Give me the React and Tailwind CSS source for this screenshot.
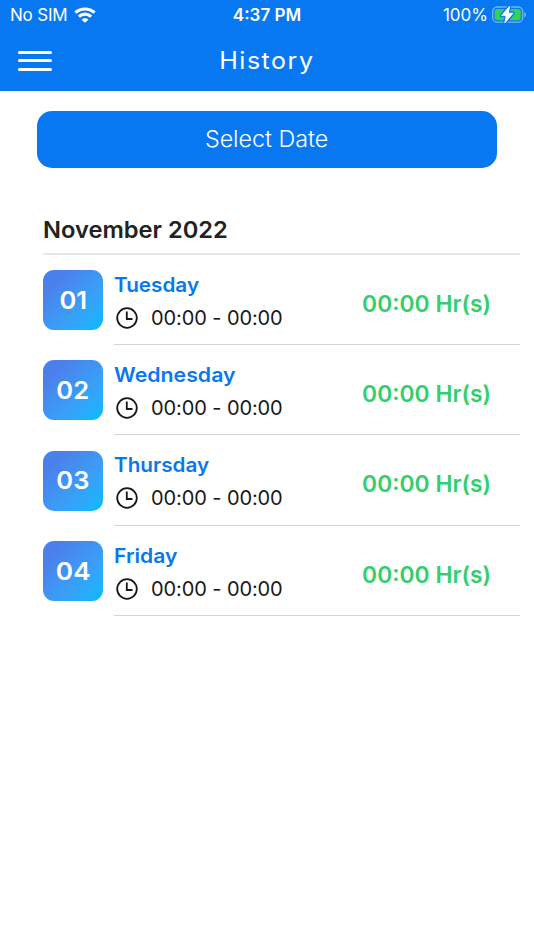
const days = [
  { date: '01', name: 'Tuesday', dateClass: 'scale-x-[1.04]', nameClass: 'scale-x-[1.035]' },
  { date: '02', name: 'Wednesday', dateClass: 'scale-x-[1.04]', nameClass: 'scale-x-[1.065]' },
  { date: '03', name: 'Thursday', dateClass: 'scale-x-[1.04]', nameClass: 'scale-x-[1.035]' },
  { date: '04', name: 'Friday', dateClass: 'scale-x-[1.07]', nameClass: 'scale-x-[1.055]' },
];

function WifiIcon() {
  return (
    <svg className="ml-[7px] h-[16px] w-[22px]" viewBox="0 0 22 16" fill="none" stroke="white" strokeWidth="3.1">
      <path d="M1.4 5.7C6.8 .7 15.2 .7 20.6 5.7" />
      <path d="M4.9 9.6C8.4 6.3 13.6 6.3 17.1 9.6" />
      <path d="M11 15.8 7.6 12.7C9.5 10.9 12.5 10.9 14.4 12.7Z" fill="white" stroke="none" />
    </svg>
  );
}

function BatteryIcon() {
  return (
    <svg className="ml-[4px] h-[20px] w-[35px]" viewBox="0 0 35 20" fill="none">
      <rect x="0.7" y="2.0" width="30" height="15.2" rx="4.5" stroke="#79b5f8" strokeWidth="1.3" />
      <rect x="2.6" y="3.9" width="26.2" height="11.4" rx="2.8" fill="#32d158" />
      <path d="M32.3 7C34.6 7.8 34.6 11.6 32.3 12.4Z" fill="#79b5f8" />
      <g strokeLinejoin="round">
        <path d="M17.6 1.2 9.6 10.6H14.2L12.9 17.8 21 8.3H16.3Z" stroke="#0879f2" strokeWidth="3.4" />
        <path d="M17.6 1.2 9.6 10.6H14.2L12.9 17.8 21 8.3H16.3Z" fill="white" stroke="white" strokeWidth="0.9" />
      </g>
    </svg>
  );
}

function ClockIcon() {
  return (
    <svg className="h-[22px] w-[22px] shrink-0" viewBox="0 0 22 22" fill="none" stroke="#181818" strokeWidth="1.8">
      <circle cx="11" cy="11" r="9.8" />
      <path d="M10.8 4.5V12H16.5" />
    </svg>
  );
}

function DayRow({ day }) {
  return (
    <li className="flex h-[90.4px] pl-[43px] pr-[14px]">
      <div className="mt-[15.5px] flex h-[60px] w-[60px] shrink-0 items-center justify-center rounded-[11px] bg-linear-to-br from-[#4b80ec] from-20% to-[#08b8ff] to-95% text-[24.5px] font-semibold text-white">
        <span className={day.dateClass}>{day.date}</span>
      </div>
      <div className="ml-[11px] flex flex-1 justify-between border-b border-[#d4d4d4] pr-[29px]">
        <div className="pt-[17px]">
          <h3 className="whitespace-nowrap text-[20px] font-semibold leading-[26px] text-[#0978ef]">
            <span className={`inline-block origin-left ${day.nameClass}`}>{day.name}</span>
          </h3>
          <div className="mt-[7px] flex h-[26px] items-center pl-[2px]">
            <ClockIcon />
            <span className="ml-[13px] whitespace-nowrap text-[20px] leading-[26px] tracking-[-0.1px] text-[#181818]">00:00 - 00:00</span>
          </div>
        </div>
        <p className="mt-[34px] origin-right scale-x-[1.015] whitespace-nowrap text-[22.5px] font-semibold leading-[30px] text-[#32cf6c]">
          00:00 Hr(s)
        </p>
      </div>
    </li>
  );
}

export default function App() {
  return (
    <div className="h-[950px] w-[534px] overflow-hidden bg-white font-['Inter',sans-serif]">
      <header className="h-[91px] bg-[#0778f1] text-white">
        <div className="grid h-[30px] grid-cols-3 items-center text-[17px]">
          <div className="flex items-center pl-[10px]">
            <span className="pt-[2px] tracking-[-0.2px]">No SIM</span>
            <WifiIcon />
          </div>
          <span className="pt-[2px] text-center font-semibold">4:37 PM</span>
          <div className="flex items-center justify-end pr-[7px]">
            <span className="pt-[2px]">100%</span>
            <BatteryIcon />
          </div>
        </div>
        <div className="grid h-[61px] grid-cols-[1fr_auto_1fr] items-center">
          <button aria-label="Menu" className="ml-[18px] flex w-[34px] flex-col gap-[5.5px]">
            <span className="h-[3px] rounded-full bg-white" />
            <span className="h-[3px] rounded-full bg-white" />
            <span className="h-[3px] rounded-full bg-white" />
          </button>
          <h1 className="scale-x-[1.04] text-[24px] tracking-[1.5px]">History</h1>
        </div>
      </header>
      <main>
        <button className="ml-[37px] mt-[20px] flex h-[57px] w-[460px] items-center justify-center rounded-[15px] bg-[#0778f1] pb-[1px] text-[22.5px] font-light text-white">
          <span className="scale-x-[1.035]">Select Date</span>
        </button>
        <h2 className="ml-[43px] mr-[14px] mt-[46px] h-[40.5px] border-b-2 border-[#e7e7e7] text-[23px] font-semibold leading-[32px] text-[#222]">
          <span className="inline-block origin-left scale-x-[1.03]">November 2022</span>
        </h2>
        <ul>
          {days.map((day) => (
            <DayRow key={day.date} day={day} />
          ))}
        </ul>
      </main>
    </div>
  );
}
